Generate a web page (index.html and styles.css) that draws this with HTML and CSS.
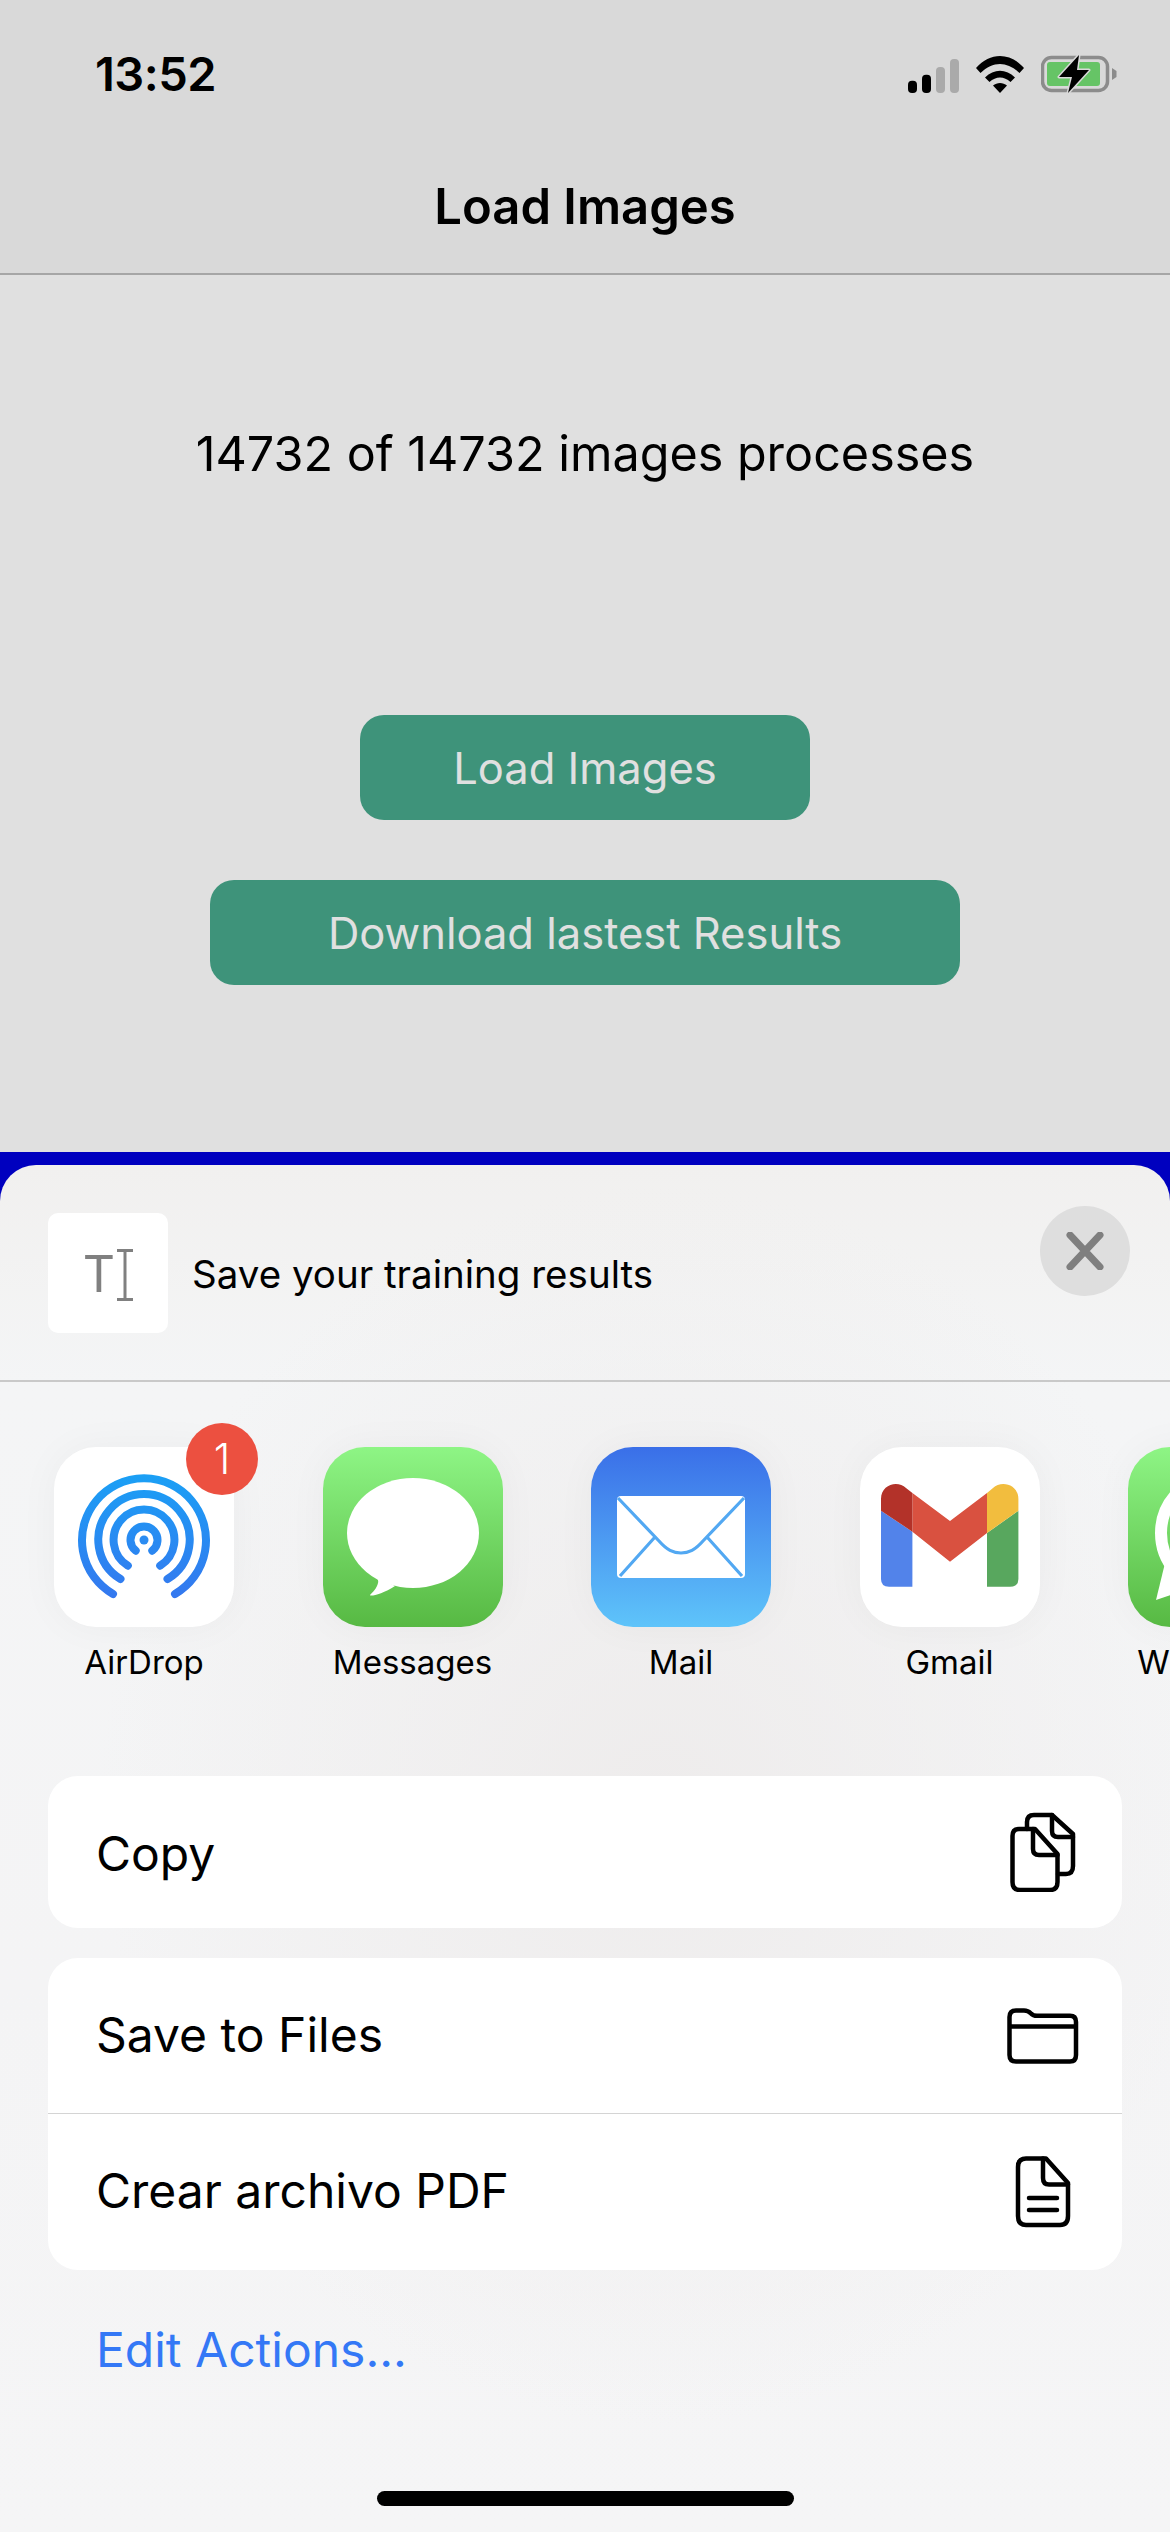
FILE: index.html
```html
<!DOCTYPE html>
<html lang="en">
<head>
<meta charset="utf-8">
<title>Load Images</title>
<link rel="stylesheet" href="styles.css">
</head>
<body>
<div class="screen">
  <header class="topbar">
    <div class="status">
      <span class="time">13:52</span>
      <div class="status-icons">
        <svg class="ic-signal" viewBox="0 0 51 34" width="51" height="34"><rect x="0" y="21.700" width="9" height="12.300" rx="4" fill="#000"/><rect x="14" y="15.700" width="9" height="18.300" rx="4" fill="#000"/><rect x="28" y="8" width="9" height="26" rx="4" fill="#aaa"/><rect x="42" y="0" width="9" height="34" rx="4" fill="#aaa"/></svg>
        <svg class="ic-wifi" viewBox="0 0 48 37" width="48" height="37"><path d="M0 12 C14 -4 34 -4 48 12 L43.500 17 C31 5 17 5 4.500 17Z" fill="#000"/><path d="M9 21.500 C18 12.500 30 12.500 39 21.500 L34.500 26 C28 20 20 20 13.500 26Z" fill="#000"/><path d="M17 29.500 C21 26 27 26 31 29.500 L24 37Z" fill="#000"/></svg>
        <svg class="ic-battery" viewBox="0 0 76 38" width="76" height="38"><rect x="1.500" y="2.500" width="65" height="33" rx="9" fill="none" stroke="#8c8c8c" stroke-width="3.500"/><rect x="6" y="7" width="53" height="24" rx="3" fill="#66c466"/><path d="M71 13 L75.500 16 V22 L71 25Z" fill="#8c8c8c"/><path d="M38 0 L18 22 H31 L27 38 L48 15 H36Z" fill="#000" stroke="#d9d9d9" stroke-width="3" paint-order="stroke" stroke-linejoin="round"/></svg>
      </div>
    </div>
    <h1 class="nav-title">Load Images</h1>
  </header>

  <main class="content">
    <p class="progress">14732 of 14732 images processes</p>
    <button class="btn btn-load">Load Images</button>
    <button class="btn btn-download">Download lastest Results</button>
  </main>

  <div class="sheet-backdrop">
    <section class="sheet">
      <div class="sheet-head">
        <div class="thumb"><span class="thumb-t">T</span><svg class="thumb-cursor" viewBox="0 0 16 52" width="16" height="52"><path d="M0 1.500H16M0 50.500H16M8 1.500V50.500" fill="none" stroke="#808080" stroke-width="3"/></svg></div>
        <p class="sheet-title">Save your training results</p>
        <div class="close"><svg viewBox="0 0 38 38" width="38" height="38"><path d="M4 3L34 35M34 3L4 35" fill="none" stroke="#7f7f7f" stroke-width="7" stroke-linecap="round"/></svg></div>
      </div>

      <div class="apps">
        <div class="app">
          <div class="app-icon icon-white">
            <svg viewBox="0 0 180 180" width="180" height="180"><defs><linearGradient id="ad" gradientUnits="userSpaceOnUse" x1="0" y1="30" x2="0" y2="150"><stop offset="0" stop-color="#1b9ff5"/><stop offset="1" stop-color="#3478ef"/></linearGradient></defs><g fill="none" stroke="url(#ad)" stroke-width="8" stroke-linecap="round"><path d="M59 147A62 62 0 1 1 121 147"/><path d="M66.500 132A45.700 45.700 0 1 1 113.500 132"/><path d="M73.800 118.700A30.400 30.400 0 1 1 106.200 118.700"/><path d="M81.700 103.700A13.500 13.500 0 1 1 98.300 103.700"/></g><circle cx="90" cy="93" r="4.500" fill="#2b8cf2"/></svg>
            <span class="badge">1</span>
          </div>
          <span class="app-label">AirDrop</span>
        </div>
        <div class="app">
          <div class="app-icon icon-green">
            <svg viewBox="0 0 180 180" width="180" height="180"><ellipse cx="90" cy="86" rx="66" ry="55" fill="#fff"/><path d="M50 128 C54 131 56 133 55 136 C54 141 50 145 47 148 C47 150 60 147 72 139Z" fill="#fff"/></svg>
          </div>
          <span class="app-label">Messages</span>
        </div>
        <div class="app">
          <div class="app-icon icon-mail">
            <svg viewBox="0 0 180 180" width="180" height="180"><rect x="26" y="49" width="128" height="82" rx="4" fill="#fff"/><g fill="none" stroke="#52a8f2" stroke-width="3.200"><path d="M27 51L68 94C76 103 82 106 90 106C98 106 104 103 112 94L153 51"/><path d="M29 129L64 90M116 90L151 129"/></g></svg>
          </div>
          <span class="app-label">Mail</span>
        </div>
        <div class="app">
          <div class="app-icon icon-white">
            <svg viewBox="0 0 180 180" width="180" height="180"><path d="M21 63.700V132Q21 139.700 29 139.700H52.400V84.700Z" fill="#5283ea"/><path d="M158.400 63.700V132Q158.400 139.700 150 139.700H127V86Z" fill="#58a75e"/><path d="M52.400 46L90 74L127 46V86L90 114.700L52.400 84.700Z" fill="#d95140"/><path d="M21 63.700V52C21 37 38 33 46 41L52.400 46V84.700Z" fill="#b33229"/><path d="M158.400 63.700V52C158.400 37 141 33 133 41L127 46V86Z" fill="#f2bd3e"/></svg>
          </div>
          <span class="app-label">Gmail</span>
        </div>
        <div class="app">
          <div class="app-icon icon-green">
            <svg viewBox="0 0 180 180" width="180" height="180"><circle cx="90" cy="86" r="57" fill="none" stroke="#fff" stroke-width="12"/><path d="M28 153L38 112L66 140Z" fill="#fff"/></svg>
          </div>
          <span class="app-label">WhatsApp</span>
        </div>
      </div>

      <div class="actions">
        <div class="card">
          <div class="row row-copy">
            <span class="row-text-copy">Copy</span>
            <svg viewBox="0 0 66 80" width="66" height="80" fill="none" stroke="#000" stroke-width="4.500" stroke-linejoin="round" stroke-linecap="round"><path d="M9 17H25L47.500 42V70Q47.500 78 40 78H10Q2.500 78 2.500 70V24Q2.500 17 9 17Z"/><path d="M23 17V37Q23 43 29 43H47.500"/><path d="M17 17V10Q17 3 24 3H42L63 22V54Q63 62 56 62H48"/><path d="M42 3V19Q42 25 48 25H63"/></svg>
          </div>
        </div>
        <div class="card">
          <div class="row row-files">
            <span class="row-text-files">Save to Files</span>
            <svg viewBox="0 0 72 56" width="72" height="56" fill="none" stroke="#000" stroke-width="4.500" stroke-linejoin="round"><path d="M2.500 18V9Q2.500 2.500 9 2.500H17Q21 2.500 24 5.500Q26 7.800 30 7.800H63Q69 7.800 69 14V47Q69 53.500 63 53.500H9Q2.500 53.500 2.500 47Z"/><path d="M2.500 18.500H69"/></svg>
          </div>
          <div class="row row-pdf">
            <span class="row-text-pdf">Crear archivo PDF</span>
            <svg viewBox="0 0 56 72" width="56" height="72" fill="none" stroke="#000" stroke-width="4.500" stroke-linejoin="round" stroke-linecap="round"><path d="M11 2.500H31L53 27V60Q53 69 45 69H11Q3 69 3 60V11Q3 2.500 11 2.500Z"/><path d="M28 2.500V22Q28 28.500 34 28.500H53"/><path d="M14 42H42M14 54H42"/></svg>
          </div>
        </div>
      </div>

      <a class="edit">Edit Actions...</a>
      <div class="home-indicator"></div>
    </section>
  </div>
</div>
</body>
</html>
```

FILE: styles.css
```css
* { box-sizing: border-box; }
html, body { margin: 0; padding: 0; }
body { width: 1170px; height: 2532px; overflow: hidden; font-family: Inter, "Liberation Sans", sans-serif; color: #000; }
.screen { width: 1170px; height: 2532px; display: flex; flex-direction: column; background: #e0e0e0; overflow: hidden; }

.topbar { height: 275px; flex: none; background: #d9d9d9; border-bottom: 2px solid #a6a6a6; }
.status { height: 143px; padding: 52px 53px 0 95px; display: flex; justify-content: space-between; align-items: flex-start; }
.time { font-size: 47px; line-height: 44px; font-weight: 600; letter-spacing: -0.5px; }
.status-icons { display: flex; align-items: center; gap: 17px; height: 44px; }
.ic-signal { margin-top: 3px; }
.nav-title { margin: 0; height: 130px; line-height: 128px; text-align: center; font-size: 49px; font-weight: 600; }

.content { height: 877px; flex: none; display: flex; flex-direction: column; align-items: center; padding-top: 149px; }
.progress { margin: 0; font-size: 48.500px; line-height: 60px; height: 60px; text-align: center; }
.btn { border: 0; background: #3e937a; color: #e0e0e0; border-radius: 24px; font-family: inherit; font-size: 43.500px; height: 105px; padding: 0; }
.btn-load { width: 450px; margin-top: 231px; }
.btn-download { width: 750px; margin-top: 60px; }

.sheet-backdrop { flex: 1; background: #0000bf; padding-top: 13px; min-height: 0; }
.sheet { height: 100%; border-radius: 36px 36px 0 0; display: flex; flex-direction: column; background: radial-gradient(ellipse 560px 620px at 660px 640px, #eeecec 0%, rgba(238, 236, 236, 0) 100%), linear-gradient(180deg, #f1f0ef 0%, #f4f5f6 16%, #f4f4f5 60%, #f5f5f6 100%); overflow: hidden; }

.sheet-head { height: 217px; flex: none; display: flex; align-items: flex-start; padding: 48px 40px 0 48px; border-bottom: 2px solid #c9c9c9; }
.thumb { width: 120px; height: 120px; border-radius: 10px; background: #fff; display: flex; align-items: center; justify-content: center; gap: 2px; flex: none; }
.thumb-t { font-size: 50px; font-weight: 400; color: #808080; line-height: 52px; margin-top: 2px; }
.thumb-cursor { margin-top: 3px; }
.sheet-title { margin: 0 0 0 24px; flex: 1; font-size: 38.500px; line-height: 122px; }
.close { width: 90px; height: 90px; margin-top: -7px; border-radius: 50%; background: #dedede; display: flex; align-items: center; justify-content: center; flex: none; }

.apps { display: flex; gap: 88.500px; padding: 65px 0 0 54px; flex: none; }
.app { width: 180px; flex: none; display: flex; flex-direction: column; align-items: center; }
.app-icon { position: relative; width: 180px; height: 180px; border-radius: 42px; box-shadow: 0 0 40px rgba(0, 0, 0, 0.04); }
.app-icon svg { display: block; border-radius: 42px; }
.icon-white { background: #fff; }
.icon-green { background: linear-gradient(180deg, #8ef585 0%, #57b943 100%); }
.icon-mail { background: linear-gradient(180deg, #3a6fe8 0%, #5ec4fa 100%); }
.badge { position: absolute; top: -24px; right: -24px; width: 72px; height: 72px; border-radius: 50%; background: #ec5040; color: #fff; font-size: 42px; line-height: 72px; text-align: center; font-weight: 300; }
.app-label { margin-top: 15px; font-size: 33px; line-height: 40px; white-space: nowrap; }

.actions { margin: 94px 48px 0; display: flex; flex-direction: column; gap: 30px; flex: none; }
.card { background: #fff; border-radius: 30px; overflow: hidden; }
.row { display: flex; align-items: center; justify-content: space-between; padding-left: 48px; font-size: 48px; }
.row-copy { height: 152px; padding-right: 46px; }
.row-files { height: 156px; padding-right: 43px; border-bottom: 1px solid #d4d4d4; }
.row-pdf { height: 156px; padding-right: 51px; }
.row-text-copy { padding-top: 2px; }
.row-text-files { padding-bottom: 2px; }
.row-text-pdf { padding-bottom: 4px; }

.edit { margin: 50px 0 0 96px; height: 60px; font-size: 48px; line-height: 60px; color: #3478f6; flex: none; }
.home-indicator { width: 417px; height: 15px; margin: 111px auto 0; border-radius: 8px; background: #000; flex: none; }
```
